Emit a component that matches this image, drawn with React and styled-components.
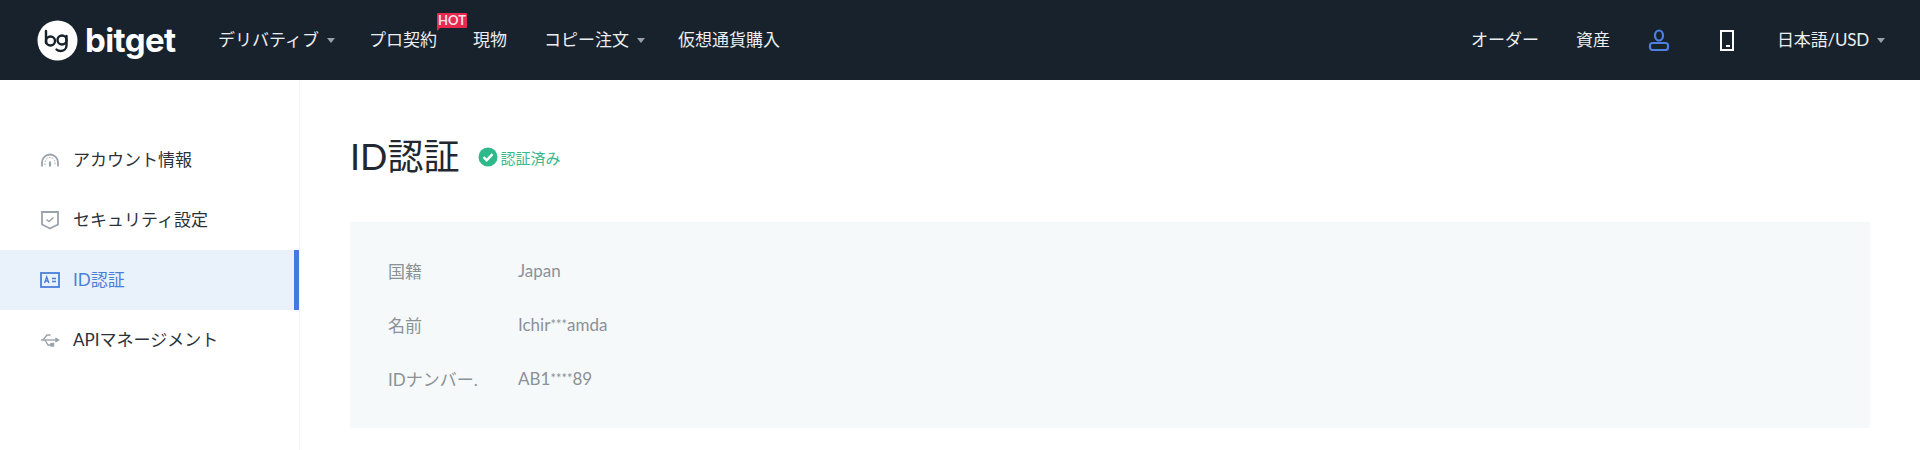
import React from 'react';
import styled, { createGlobalStyle } from 'styled-components';

const GlobalStyle = createGlobalStyle`
  html, body {
    margin: 0;
    padding: 0;
    background: #ffffff;
    overflow: hidden;
  }
  body {
    font-family: Lato, "Noto Sans CJK JP", sans-serif;
  }
`;

const Page = styled.div`
  width: 1920px;
  height: 450px;
  overflow: hidden;
`;

const Header = styled.header`
  display: flex;
  align-items: center;
  justify-content: space-between;
  height: 80px;
  padding: 0 35px 0 37px;
  background: #18222d;
  color: #ffffff;
`;

const NavGroup = styled.nav`
  display: flex;
  align-items: center;
`;

const LogoWrap = styled.div`
  display: flex;
  align-items: center;
  gap: 7px;
  width: 181px;
`;

const LogoText = styled.span`
  font-family: Inter, sans-serif;
  font-size: 33px;
  font-weight: 700;
  line-height: 40px;
  letter-spacing: -0.6px;
  color: #ffffff;
`;

const NavItem = styled.a`
  position: relative;
  display: flex;
  align-items: center;
  gap: 8px;
  margin-right: ${(p) => p.$gap}px;
  font-size: 17px;
  line-height: 24px;
  letter-spacing: ${(p) => p.$tight ? '-0.2px' : 'normal'};
  color: #eceef0;
`;

const Caret = styled.i`
  width: 0;
  height: 0;
  border-left: 4px solid transparent;
  border-right: 4px solid transparent;
  border-top: 5px solid #9aa0a6;
`;

const HotBadge = styled.span`
  position: absolute;
  top: -15px;
  right: -30px;
  width: 30px;
  height: 15px;
  border-radius: 1px 1px 1px 0;
  background: #e5294f;
  color: #f7dfe4;
  font-size: 13px;
  font-weight: 700;
  line-height: 15px;
  text-align: center;

  &::after {
    content: '';
    position: absolute;
    left: 0;
    top: 15px;
    border-top: 3px solid #e5294f;
    border-right: 3px solid transparent;
  }
`;

const Body = styled.div`
  display: flex;
  height: 370px;
`;

const Sidebar = styled.aside`
  flex: none;
  box-sizing: border-box;
  width: 300px;
  padding-top: 50px;
  border-right: 1px solid #f0f3f7;
`;

const SideItem = styled.a`
  display: flex;
  align-items: center;
  gap: 13px;
  box-sizing: border-box;
  height: 60px;
  padding-left: 40px;
  font-size: 17px;
  color: ${(p) => (p.$active ? '#4a7fd8' : '#2b3138')};
  background: ${(p) => (p.$active ? '#e9f1fb' : 'transparent')};
  border-right: 5px solid ${(p) => (p.$active ? '#4579e0' : 'transparent')};
`;

const SideLabel = styled.span`
  margin-bottom: 4px;
`;

const Main = styled.main`
  flex: 1;
  padding: 50px 50px 0;
`;

const TitleRow = styled.div`
  display: flex;
  align-items: center;
  height: 54px;
`;

const Title = styled.h1`
  margin: -2px 19px 0 0;
  font-size: 36px;
  font-weight: 400;
  line-height: 54px;
  color: #22282f;
`;

const Verified = styled.span`
  display: flex;
  align-items: center;
  gap: 2px;
  font-size: 15px;
  color: #3bb98c;
`;

const InfoCard = styled.section`
  display: flex;
  flex-direction: column;
  gap: 30px;
  box-sizing: border-box;
  height: 206px;
  margin-top: 38px;
  padding: 36px 38px;
  background: #f6f9fa;
  border-radius: 2px;
`;

const InfoRow = styled.div`
  display: flex;
  align-items: center;
  height: 24px;
  font-size: 17px;
  color: #8b9198;
`;

const InfoLabel = styled.span`
  width: 130px;
`;

const Mask = styled.span`
  font-size: 13px;
  line-height: 1;
  vertical-align: 2px;
`;

const LogoMark = () => (
  <svg width="41" height="41" viewBox="0 0 41 41" fill="none">
    <circle cx="20.5" cy="20.5" r="20" fill="#fff" />
    <g stroke="#18222d" strokeWidth="2.4" strokeLinecap="round">
      <path d="M9 11v12" />
      <circle cx="13.5" cy="21" r="4.5" />
      <circle cx="25" cy="20" r="4.5" />
      <path d="M29.5 16v9.5c0 3.5-3 5.5-6 5.5-1.500 0-3-.5-4-1.500" />
    </g>
  </svg>
);

const UserIcon = () => (
  <svg width="22" height="22" viewBox="0 0 22 22" fill="none" stroke="#4d7fe0" strokeWidth="2.2">
    <ellipse cx="11" cy="6.500" rx="4" ry="5" />
    <rect x="2" y="14" width="18" height="7" rx="2.500" />
  </svg>
);

const PhoneIcon = () => (
  <svg width="14" height="21" viewBox="0 0 14 21" fill="none">
    <rect x="1" y="1" width="12" height="19" stroke="#fff" strokeWidth="2" />
    <rect x="6" y="15" width="4" height="2" fill="#fff" />
  </svg>
);

const GaugeIcon = () => (
  <svg width="20" height="20" viewBox="0 0 20 20" fill="none" stroke="#9aa2ab" strokeWidth="1.800">
    <path d="M2 16.500v-4a8 8 0 0 1 16 0v4" />
    <path d="M5 15v-2.500a5 5 0 0 1 10 0V15" strokeDasharray="1.500 1.500" strokeWidth="1" />
    <path d="M10 11.500v5" strokeWidth="2.200" />
  </svg>
);

const ShieldIcon = () => (
  <svg width="20" height="20" viewBox="0 0 20 20" fill="none" stroke="#9aa2ab" strokeWidth="1.800">
    <path d="M2 2h16v12.500L10 18.500 2 14.500z" />
    <path d="M6.500 9.500l2.500 2 4.500-4" strokeWidth="1.400" />
  </svg>
);

const IdIcon = () => (
  <svg width="20" height="20" viewBox="0 0 20 20" fill="none" stroke="#4a7fd8" strokeWidth="1.800">
    <rect x="1" y="3" width="18" height="14" />
    <path d="M4.500 13l2.200-6 2.200 6M5.300 11h2.800M12 8.500h4M12 11.500h4" strokeWidth="1.300" />
  </svg>
);

const UsbIcon = () => (
  <svg width="20" height="20" viewBox="0 0 20 20" fill="none" stroke="#9aa2ab" strokeWidth="1.400">
    <path d="M1 10h17" />
    <path d="M15.500 8l3 2-3 2" fill="#9aa2ab" />
    <path d="M3 10l4-5h3.500M5 10l3 5h3" />
    <rect x="11" y="13.500" width="2.500" height="2.500" fill="#9aa2ab" />
  </svg>
);

const CheckBadge = () => (
  <svg width="20" height="20" viewBox="0 0 20 20">
    <circle cx="10" cy="10" r="9.500" fill="#2fb98a" />
    <path d="M5.500 10.200l3.200 3 5.800-6" fill="none" stroke="#fff" strokeWidth="2.400" />
  </svg>
);

const sideItems = [
  { label: 'アカウント情報', icon: <GaugeIcon /> },
  { label: 'セキュリティ設定', icon: <ShieldIcon /> },
  { label: 'ID認証', icon: <IdIcon />, active: true },
  { label: 'APIマネージメント', icon: <UsbIcon /> },
];

const infoRows = [
  { label: '国籍', value: 'Japan' },
  { label: '名前', value: <span>Ichir<Mask>***</Mask>amda</span> },
  { label: 'IDナンバー.', value: <span>AB1<Mask>****</Mask>89</span> },
];

const App = () => {
  return (
    <Page>
      <GlobalStyle />
      <Header>
        <NavGroup>
          <LogoWrap>
            <LogoMark />
            <LogoText>bitget</LogoText>
          </LogoWrap>
          <NavItem $gap={34}>デリバティブ<Caret /></NavItem>
          <NavItem $gap={36}>プロ契約<HotBadge>HOT</HotBadge></NavItem>
          <NavItem $gap={37}>現物</NavItem>
          <NavItem $gap={33}>コピー注文<Caret /></NavItem>
          <NavItem $gap={0}>仮想通貨購入</NavItem>
        </NavGroup>
        <NavGroup>
          <NavItem $gap={37}>オーダー</NavItem>
          <NavItem $gap={38}>資産</NavItem>
          <NavItem $gap={50}><UserIcon /></NavItem>
          <NavItem $gap={43}><PhoneIcon /></NavItem>
          <NavItem $gap={0} $tight>日本語/USD<Caret /></NavItem>
        </NavGroup>
      </Header>
      <Body>
        <Sidebar>
          {sideItems.map((item) => (
            <SideItem key={item.label} $active={item.active}>
              {item.icon}
              <SideLabel>{item.label}</SideLabel>
            </SideItem>
          ))}
        </Sidebar>
        <Main>
          <TitleRow>
            <Title>ID認証</Title>
            <Verified>
              <CheckBadge />
              認証済み
            </Verified>
          </TitleRow>
          <InfoCard>
            {infoRows.map((row) => (
              <InfoRow key={row.label}>
                <InfoLabel>{row.label}</InfoLabel>
                {row.value}
              </InfoRow>
            ))}
          </InfoCard>
        </Main>
      </Body>
    </Page>
  );
};

export default App;
